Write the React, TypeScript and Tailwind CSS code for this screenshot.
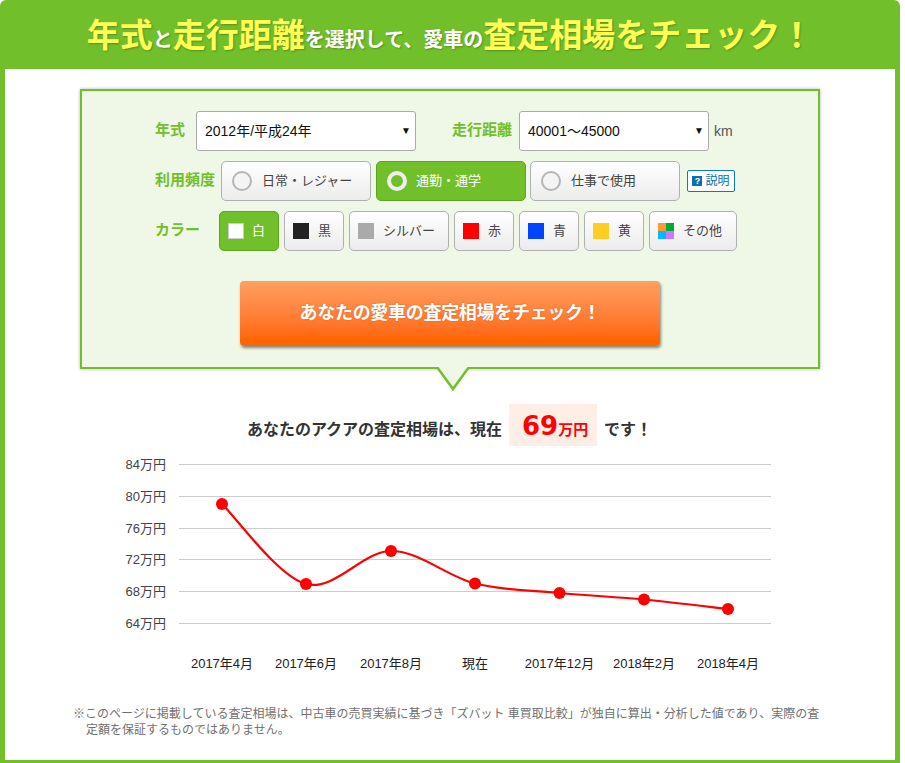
const sansStack = "font-['Liberation_Sans','Noto_Sans_CJK_JP',sans-serif]"

const usage = [
  { label: '日常・レジャー', active: false, width: 'w-[150px]' },
  { label: '通勤・通学', active: true, width: 'w-[150px]' },
  { label: '仕事で使用', active: false, width: 'w-[150px] -ml-[1px]' },
]

const colors = [
  { label: '白', swatch: 'bg-white border border-[#cccccc] mr-[8px]', width: 'w-[60px]', active: true },
  { label: '黒', swatch: 'bg-[#222222] mr-[9px]', width: 'w-[60px]' },
  { label: 'シルバー', swatch: 'bg-[#aaaaaa] mr-[9px]', width: 'w-[100px]' },
  { label: '赤', swatch: 'bg-[#ff0000] mr-[9px]', width: 'w-[60px]' },
  { label: '青', swatch: 'bg-[#0044ff] mr-[9px]', width: 'w-[60px]' },
  { label: '黄', swatch: 'bg-[#ffcc22] mr-[9px]', width: 'w-[60px]' },
]

// x, y in page pixels
const points = [
  [222, 504],
  [306, 584],
  [391, 551],
  [475, 583.5],
  [559.5, 593],
  [644, 599.5],
  [728, 609],
]

const xLabels = ['2017年4月', '2017年6月', '2017年8月', '現在', '2017年12月', '2018年2月', '2018年4月']

const yTicks = [
  { label: '84万円', y: 464.5 },
  { label: '80万円', y: 496.5 },
  { label: '76万円', y: 528.5 },
  { label: '72万円', y: 559.5 },
  { label: '68万円', y: 591.5 },
  { label: '64万円', y: 623.5 },
]

function smoothPath(pts: number[][]) {
  let d = `M${pts[0][0]} ${pts[0][1]}`
  for (let i = 0; i < pts.length - 1; i++) {
    const p0 = pts[Math.max(i - 1, 0)]
    const p1 = pts[i]
    const p2 = pts[i + 1]
    const p3 = pts[Math.min(i + 2, pts.length - 1)]
    const c1x = p1[0] + (p2[0] - p0[0]) / 6
    const c1y = p1[1] + (p2[1] - p0[1]) / 6
    const c2x = p2[0] - (p3[0] - p1[0]) / 6
    const c2y = p2[1] - (p3[1] - p1[1]) / 6
    d += ` C${c1x} ${c1y} ${c2x} ${c2y} ${p2[0]} ${p2[1]}`
  }
  return d
}

function SelectBox({ value, width }: { value: string; width: string }) {
  return (
    <div className={`${width} relative h-10 flex items-center rounded-[3px] border border-[#aaaaaa] bg-white pl-2 text-[14px] text-[#111111]`}>
      {value}
      <span className="absolute right-[4px] top-[12px] text-[10px] leading-[14px] text-[#111111]">▼</span>
    </div>
  )
}

function Label({ children, width }: { children: string; width: string }) {
  return (
    <div className={`${width} shrink-0 pb-[2px] text-[15px] font-bold text-[#72bf2c]`}>{children}</div>
  )
}

function OptionButton({ active, width, children }: { active?: boolean; width: string; children: React.ReactNode }) {
  return (
    <div
      className={`${width} h-10 flex items-center rounded-[5px] border text-[13px] ${
        active
          ? 'border-[#5fa322] bg-[#72bf2c] text-white'
          : 'border-[#b0b0b0] bg-gradient-to-b from-white to-[#ececec] text-[#444444]'
      }`}
    >
      {children}
    </div>
  )
}

export default function App() {
  return (
    <div className={`${sansStack} w-[900px] h-[763px] flex flex-col overflow-hidden`}>
      <h1 className="h-[69px] shrink-0 flex items-baseline justify-center pt-[11px] rounded-t-[6px] bg-[#72bf2c] font-bold text-white text-[20px] [text-shadow:1px_1px_2px_rgba(0,0,0,0.25)]">
        <span className="text-[33px] text-[#ffff55]">年式</span>
        <span>と</span>
        <span className="text-[33px] text-[#ffff55]">走行距離</span>
        <span>を選択して、</span>
        <span>愛車の</span>
        <span className="text-[33px] text-[#ffff55]">査定相場をチェック！</span>
      </h1>

      <div className="flex-1 flex flex-col items-center border-x-[5px] border-b-[3px] border-[#72bf2c] bg-white pt-5">
        <div className="relative w-[740px] h-[280px] shrink-0 border-2 border-[#72bf2c] bg-[#eff7e7] shadow-[0_0_3px_rgba(0,0,0,0.3)] pt-5 pl-[73px]">
          <div className="flex items-center">
            <Label width="w-[41px]">年式</Label>
            <SelectBox value="2012年/平成24年" width="w-[220px]" />
            <Label width="w-[67px] ml-[36px]">走行距離</Label>
            <SelectBox value="40001～45000" width="w-[190px]" />
            <span className="ml-[5px] text-[14px] text-[#555555]">km</span>
          </div>

          <div className="mt-[10px] flex items-center">
            <Label width="w-[66px]">利用頻度</Label>
            <div className="flex gap-[5px]">
              {usage.map((u) => (
                <OptionButton key={u.label} active={u.active} width={u.width}>
                  <span
                    className={`ml-[10px] size-5 rounded-full ${
                      u.active ? 'mr-[9px] border-[4px] border-[#eeeeee] bg-[#72bf2c]' : 'mr-[10px] border-2 border-[#b5b5b5] bg-[#f4f4f4]'
                    }`}
                  />
                  {u.label}
                </OptionButton>
              ))}
            </div>
            <div className="ml-[7px] w-[48px] h-[22px] flex items-center justify-center gap-[3px] rounded-[2px] border border-[#0b7cc1] bg-white text-[12px] text-[#0b6fb0]">
              <span className="size-[10px] flex items-center justify-center bg-[#0b6fb0] text-[9px] font-bold leading-none text-white">?</span>
              説明
            </div>
          </div>

          <div className="mt-[10px] flex items-center">
            <Label width="w-[64px]">カラー</Label>
            <div className="flex gap-[5px]">
              {colors.map((c) => (
                <OptionButton key={c.label} active={c.active} width={c.width}>
                  <span className={`ml-[8px] size-4 ${c.swatch}`} />
                  {c.label}
                </OptionButton>
              ))}
              <OptionButton width="w-[88px]">
                <span className="ml-[8px] mr-[9px] size-4 grid grid-cols-2">
                  <span className="bg-[#ff9933]" />
                  <span className="bg-[#00aa33]" />
                  <span className="bg-[#00bbff]" />
                  <span className="bg-[#cc77ff]" />
                </span>
                その他
              </OptionButton>
            </div>
          </div>

          <div className="ml-[85px] mt-[30px] w-[420px] h-[65px] flex items-center justify-center rounded-[4px] bg-gradient-to-b from-[#ff9f5f] to-[#ff6600] to-90% text-[18px] font-bold tracking-[-0.3px] text-white shadow-[1px_2px_3px_rgba(0,0,0,0.45)] [text-shadow:0_0_2px_rgba(120,60,0,0.3)]">
            あなたの愛車の査定相場をチェック！
          </div>

          <svg className="absolute left-[354px] top-[276px]" width="34" height="26" viewBox="0 0 34 26">
            <path d="M1 0 L17 23 L33 0 Z" fill="#eff7e7" />
            <path d="M1 0 L17 22 L33 0" fill="none" stroke="#72bf2c" strokeWidth="2.5" />
          </svg>
        </div>

        <div className="mt-[35px] h-[42px] flex items-center text-[16px] font-bold text-[#333333] -ml-[1px]">
          <span className="mt-[9px]">あなたのアクアの査定相場は、現在</span>
          <div className="mx-[7px] w-[88px] h-[42px] flex items-baseline justify-center pt-[3px] pl-[4px] bg-[#ffeee5] text-[#ff0000]">
            <span className="font-['DejaVu_Sans',sans-serif] text-[26px]">69</span>
            <span className="text-[15px]">万円</span>
          </div>
          <span className="mt-[9px]">です！</span>
        </div>

        {/* chart area, page coords translated by the viewBox */}
        <svg className="mt-[9px] shrink-0 self-start" width="890" height="220" viewBox="5 455 890 220">
          {yTicks.map((t) => (
            <g key={t.label}>
              <line x1="179" x2="771" y1={t.y} y2={t.y} stroke="#cccccc" />
              <text x="166" y={t.y + 4.5} textAnchor="end" fontSize="13" fill="#444444">{t.label}</text>
            </g>
          ))}
          <path d={smoothPath(points)} fill="none" stroke="#ff0000" strokeWidth="2.2" />
          {points.map(([x, y]) => (
            <circle key={x} cx={x} cy={y} r="6" fill="#ff0000" />
          ))}
          {xLabels.map((label, i) => (
            <text key={label} x={points[i][0]} y="668" textAnchor="middle" fontSize="13" fill="#222222">{label}</text>
          ))}
        </svg>

        <p className="mt-[31px] w-[752px] self-start ml-[68px] pl-[13px] -indent-[13px] text-[12px] leading-[16px] text-[#707070]">
          ※このページに掲載している査定相場は、中古車の売買実績に基づき「ズバット 車買取比較」が独自に算出・分析した値であり、実際の査定額を保証するものではありません。
        </p>
      </div>
    </div>
  )
}
